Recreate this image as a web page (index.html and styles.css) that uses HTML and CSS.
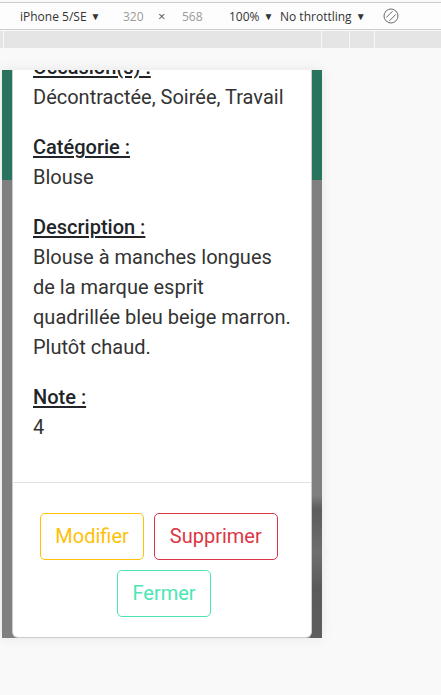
FILE: index.html
```html
<!DOCTYPE html>
<html lang="fr">
<head>
<meta charset="utf-8">
<title>Vêtement</title>
<link rel="stylesheet" href="styles.css">
</head>
<body>
<div class="toolbar">
  <span class="tb-item tb-device">iPhone 5/SE <span class="caret">▼</span></span>
  <span class="tb-item tb-dim tb-w">320</span>
  <span class="tb-item tb-x">×</span>
  <span class="tb-item tb-dim tb-h">568</span>
  <span class="tb-item tb-zoom">100% <span class="caret">▼</span></span>
  <span class="tb-item tb-throttle">No throttling <span class="caret">▼</span></span>
  <span class="tb-item tb-rotate">
    <svg width="16" height="16" viewBox="0 0 16 16" aria-hidden="true">
      <circle cx="8" cy="8" r="7" fill="none" stroke="#6b6b6b" stroke-width="1"/>
      <line x1="3.2" y1="9.6" x2="9.6" y2="3.2" stroke="#6b6b6b" stroke-width="1"/>
      <line x1="6.4" y1="12.8" x2="12.8" y2="6.4" stroke="#6b6b6b" stroke-width="1"/>
    </svg>
  </span>
</div>
<div class="ruler">
  <span class="seg seg-a"></span>
  <span class="seg seg-b"></span>
  <span class="seg seg-c"></span>
  <span class="seg seg-d"></span>
</div>

<div class="stage">
  <div class="phone">
    <div class="page">
      <div class="page-header"></div>
      <div class="page-body"></div>
      <div class="page-dark"></div>
    </div>

    <div class="modal">
      <div class="modal-body">
        <div class="field">
          <p class="label">Occasion(s) :</p>
          <p class="value">Décontractée, Soirée, Travail</p>
        </div>
        <div class="field">
          <p class="label">Catégorie :</p>
          <p class="value">Blouse</p>
        </div>
        <div class="field">
          <p class="label">Description :</p>
          <p class="value">Blouse à manches longues de la marque esprit quadrillée bleu beige marron. Plutôt chaud.</p>
        </div>
        <div class="field">
          <p class="label">Note :</p>
          <p class="value">4</p>
        </div>
      </div>
      <div class="modal-footer">
        <button class="btn btn-warning" type="button">Modifier</button>
        <button class="btn btn-danger" type="button">Supprimer</button>
        <button class="btn btn-close" type="button">Fermer</button>
      </div>
    </div>
  </div>
</div>
</body>
</html>
```
FILE: styles.css
```css
html, body {
  margin: 0;
  padding: 0;
}

body {
  background: #f9f9f9;
  width: 441px;
  height: 695px;
  overflow: hidden;
  font-family: "Open Sans", "Liberation Sans", sans-serif;
}

/* ---------- devtools toolbar ---------- */
.toolbar {
  margin-top: 2px;
  height: 26px;
  border-top: 1px solid #cbcbcb;
  border-bottom: 1px solid #cbcbcb;
  background: #fdfdfd;
  display: flex;
  align-items: center;
  padding-left: 20px;
  font-size: 12px;
  color: #333;
  white-space: nowrap;
}

.tb-item {
  display: inline-flex;
  align-items: center;
}

.caret {
  font-size: 10px;
  margin-left: 4px;
  color: #333;
}

.tb-device { width: 103px; }
.tb-w { width: 35px; }
.tb-x { width: 24px; color: #555; font-size: 13px; }
.tb-h { width: 47px; }
.tb-zoom { width: 51px; }
.tb-throttle { width: 103px; }
.tb-dim { color: #9a9a9a; }
.tb-rotate { height: 16px; }

.ruler {
  margin-top: 1px;
  height: 17px;
  background: #e5e5e5;
  position: relative;
}

.seg {
  position: absolute;
  top: 0;
  bottom: 0;
  width: 1px;
  background: #f7f7f7;
}
.seg-a { left: 3px; }
.seg-b { left: 321px; }
.seg-c { left: 349px; }
.seg-d { left: 374px; }

/* ---------- device viewport ---------- */
.stage {
  padding-top: 22px;
  padding-left: 2px;
}

.phone {
  position: relative;
  width: 320px;
  height: 568px;
  overflow: hidden;
  box-shadow: 0 0 12px rgba(0, 0, 0, 0.08);
  font-family: Roboto, "Noto Sans", sans-serif;
}

.page {
  height: 100%;
  display: flex;
  flex-direction: column;
}

.page-header {
  height: 110px;
  background: #28745e;
}

.page-body {
  flex: 1;
  background: #808080;
}

.page-dark {
  position: absolute;
  right: 0;
  top: 425px;
  width: 12px;
  height: 143px;
  background: linear-gradient(to bottom, #808080 0%, #5c5c5c 10%, #6e6e6e 40%, #5a5a5a 65%, #5d5d5d 100%);
}

/* ---------- modal ---------- */
.modal {
  position: absolute;
  left: 10px;
  bottom: 0;
  width: 300px;
  box-sizing: border-box;
  background: #fff;
  border: 1px solid rgba(0, 0, 0, 0.2);
  border-top: 0;
  border-radius: 0 0 6px 6px;
}

.modal-body {
  padding: 0 20px 20px;
  font-size: 20px;
  line-height: 30px;
}

.field {
  margin-bottom: 20px;
}

.field:last-child {
  margin-bottom: 0;
}

.label,
.value {
  margin: 0;
}

.label {
  font-weight: 500;
  color: #212529;
  text-decoration: underline;
  text-underline-offset: 2px;
}

.value {
  color: #333;
}

.modal-body .field:last-child {
  padding-bottom: 20px;
}

.modal-footer {
  border-top: 1px solid #dee2e6;
  padding: 25px 18px 15px 12px;
  display: flex;
  flex-wrap: wrap;
  justify-content: center;
}

.btn {
  margin: 5px;
  font-family: Roboto, "Noto Sans", sans-serif;
  font-size: 20px;
  line-height: 30px;
  font-weight: 400;
  padding: 7px 14px 8px;
  background: transparent;
  border: 1px solid;
  border-radius: 5px;
  cursor: pointer;
}

.btn-warning {
  color: #ffc107;
  border-color: #ffc107;
}

.btn-danger {
  padding-left: 15px;
  padding-right: 15px;
  color: #dc3545;
  border-color: #dc3545;
}

.btn-close {
  margin-left: 15px;
  color: #4ce5b6;
  border-color: #4ce5b6;
}
```
